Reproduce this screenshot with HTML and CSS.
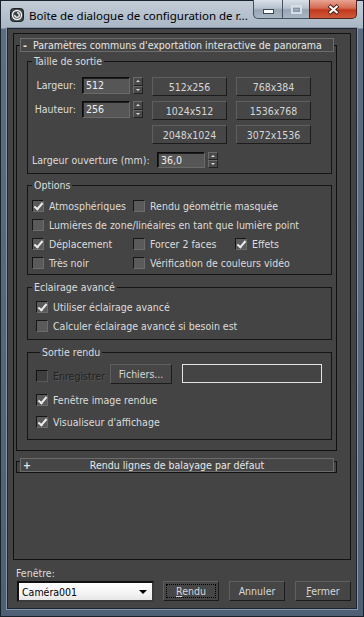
FILE: index.html
```html
<!DOCTYPE html>
<html lang="fr">
<head>
<meta charset="UTF-8">
<title>Boîte de dialogue de configuration de rendu panorama</title>
<link rel="stylesheet" href="styles.css">
</head>
<body>
<div class="window">
  <div class="titlebar">
    <svg class="app-icon" width="14" height="14" viewBox="0 0 14 14">
      <rect x="0.5" y="0.5" width="13" height="13" rx="3" fill="#3d4446" stroke="#1c2224"/>
      <circle cx="7" cy="7" r="4.5" fill="none" stroke="#f2f2f2" stroke-width="1.5"/>
      <path d="M7 4.7 A2.3 2.3 0 1 1 4.7 7" fill="none" stroke="#f2f2f2" stroke-width="1.3"/>
    </svg>
    <span class="title">Boîte de dialogue de configuration de r...</span>
    <div class="caption">
      <span class="cap cap-min">
        <svg width="11" height="5" viewBox="0 0 11 5"><rect x="0.5" y="0.5" width="10" height="4" fill="#fff" stroke="#3a4654"/></svg>
      </span>
      <span class="cap cap-max">
        <svg width="11" height="9" viewBox="0 0 11 9"><rect x="1" y="1" width="9" height="7" fill="none" stroke="#d6dde5" stroke-width="2"/><rect x="2.5" y="3.5" width="6" height="3" fill="none" stroke="#8694a3"/></svg>
      </span>
      <span class="cap cap-close">
        <svg width="13" height="11" viewBox="0 0 13 11"><path d="M2 1.5 L11 9.5 M11 1.5 L2 9.5" stroke="#4a1a12" stroke-width="4"/><path d="M2.5 2 L10.5 9 M10.5 2 L2.5 9" stroke="#fff" stroke-width="2.2"/></svg>
      </span>
    </div>
  </div>

  <div class="client">
    <div class="panel">
      <div class="rollout">
        <div class="rollout-head"><span class="toggle">-</span><span>Paramètres communs d'exportation interactive de panorama</span><span></span></div>
        <div class="rollout-body">

          <div class="group group-size">
            <div class="legend">Taille de sortie</div>
            <div class="size-top">
              <div class="dims">
                <div class="dim-row">
                  <span class="dim-label">Largeur:</span>
                  <span class="num">512</span>
                  <span class="spin"><span class="up"></span><span class="down"></span></span>
                </div>
                <div class="dim-row">
                  <span class="dim-label">Hauteur:</span>
                  <span class="num">256</span>
                  <span class="spin"><span class="up"></span><span class="down"></span></span>
                </div>
              </div>
              <div class="presets">
                <button class="btn">512x256</button>
                <button class="btn">768x384</button>
                <button class="btn">1024x512</button>
                <button class="btn">1536x768</button>
                <button class="btn">2048x1024</button>
                <button class="btn">3072x1536</button>
              </div>
            </div>
            <div class="aperture">
              <span class="aperture-label">Largeur ouverture (mm):</span>
              <span class="num num-short">36,0</span>
              <span class="spin spin-short"><span class="up"></span><span class="down"></span></span>
            </div>
          </div>

          <div class="group group-options">
            <div class="legend">Options</div>
            <div class="options">
              <label class="opt"><span class="check on"></span>Atmosphériques</label>
              <label class="opt wide"><span class="check"></span>Rendu géométrie masquée</label>
              <label class="opt full"><span class="check"></span>Lumières de zone/linéaires en tant que lumière point</label>
              <label class="opt"><span class="check on"></span>Déplacement</label>
              <label class="opt"><span class="check"></span>Forcer 2 faces</label>
              <label class="opt"><span class="check on"></span>Effets</label>
              <label class="opt"><span class="check"></span>Très noir</label>
              <label class="opt wide"><span class="check"></span>Vérification de couleurs vidéo</label>
            </div>
          </div>

          <div class="group group-light">
            <div class="legend">Eclairage avancé</div>
            <div class="list">
              <label class="opt"><span class="check on"></span>Utiliser éclairage avancé</label>
              <label class="opt"><span class="check"></span>Calculer éclairage avancé si besoin est</label>
            </div>
          </div>

          <div class="group group-output">
            <div class="legend">Sortie rendu</div>
            <div class="save-row">
              <label class="opt disabled"><span class="check"></span>Enregistrer</label>
              <button class="btn btn-files">Fichiers...</button>
              <span class="path"></span>
            </div>
            <label class="opt out-row"><span class="check on"></span>Fenêtre image rendue</label>
            <label class="opt out-row last"><span class="check on"></span>Visualiseur d'affichage</label>
          </div>

        </div>
      </div>

      <div class="rollout closed">
        <div class="rollout-head"><span class="toggle">+</span><span>Rendu lignes de balayage par défaut</span><span></span></div>
      </div>
    </div>

    <div class="footer-label">Fenêtre:</div>
    <div class="footer-row">
      <div class="select">Caméra001<span class="arrow"></span></div>
      <button class="btn btn-main focused"><u>R</u>endu</button>
      <button class="btn btn-main">Annuler</button>
      <button class="btn btn-main"><u>F</u>ermer</button>
    </div>
  </div>
</div>
</body>
</html>
```

FILE: styles.css
```css
* {
  box-sizing: border-box;
}

body {
  margin: 0;
  background: #000;
  font-family: "DejaVu Sans Condensed", "DejaVu Sans", sans-serif;
  font-size: 10.5px;
  color: #dcdcdc;
}

button {
  font: inherit;
  color: inherit;
  padding: 0;
}

.window {
  width: 364px;
  height: 617px;
  border: 1px solid #18222d;
  background: linear-gradient(#c3cdd8, #a9b6c4 27px, #5d6e83 28px, #4f6075);
  padding: 0 6px 7px;
  display: flex;
  flex-direction: column;
}

/* title bar */
.titlebar {
  height: 27px;
  margin: 0 -6px;
  padding-left: 9px;
  display: flex;
  align-items: flex-start;
}
.app-icon {
  margin-top: 7px;
  flex: none;
}
.title {
  margin-left: 5px;
  margin-top: 6px;
  font-family: "Noto Sans", "Open Sans", sans-serif;
  font-size: 11.5px;
  line-height: 17px;
  color: #000;
  white-space: nowrap;
}
.caption {
  margin-left: auto;
  margin-right: 6px;
  margin-top: -1px;
  display: flex;
}
.cap {
  height: 19px;
  display: flex;
  align-items: center;
  justify-content: center;
  border: 1px solid #45515f;
  border-top: 0;
  background: linear-gradient(#d9e0e8, #b7c2ce 45%, #97a5b5 55%, #a9b6c4);
}
.cap-min {
  width: 29px;
  border-right: 0;
  border-bottom-left-radius: 5px;
  padding-top: 4px;
}
.cap-max {
  width: 27px;
  border-right: 0;
}
.cap-close {
  width: 48px;
  border-color: #50261e;
  border-bottom-right-radius: 5px;
  background: linear-gradient(#e8a491, #d36b52 45%, #c2391c 55%, #cf5b3c);
}

/* client */
.client {
  flex: 1;
  background: #444;
  border: 1px solid #1c2632;
  box-shadow: 0 0 0 1px #8796a8;
  display: flex;
  flex-direction: column;
}

.panel {
  height: 527px;
  margin: 4px 5px 0;
  border: 1px solid #121212;
  padding: 11px 13px 0 2px;
}

.rollout {
  border: 1px solid #111;
}
.rollout.closed {
  margin-top: 10px;
}
.rollout-head {
  margin: -8px 2px 0 3px;
  height: 14px;
  border: 1px solid #6c6c6c;
  background: #464646;
  color: #e6e6e6;
  line-height: 12px;
  display: grid;
  grid-template-columns: 12px 1fr 12px;
  text-align: center;
  white-space: nowrap;
}
.rollout.closed .rollout-head {
  margin-top: -4px;
}
.toggle {
  text-align: left;
  padding-left: 2px;
  font-weight: bold;
}
.rollout-body {
  padding: 0 4px 10px 10px;
}

.group {
  border: 1px solid #141414;
  margin-top: 12px;
}
.group-size {
  margin-top: 9px;
  padding-bottom: 5px;
}
.group-options {
  margin-top: 11px;
}
.legend {
  margin: -7px 0 0 4px;
  padding: 0 2px;
  width: max-content;
  line-height: 13px;
  background: #444;
}

/* output size */
.size-top {
  display: flex;
  margin-top: 9px;
}
.dim-row {
  display: flex;
  align-items: flex-start;
  height: 19px;
}
.dim-row + .dim-row {
  margin-top: 5px;
}
.dim-label {
  width: 48px;
  text-align: right;
  line-height: 17px;
}
.num {
  width: 48px;
  height: 17px;
  margin-left: 6px;
  padding-left: 3px;
  line-height: 14px;
  background: #565656;
  color: #eee;
  border: 1px solid;
  border-color: #0c0c0c #6a6a6a #6a6a6a #0c0c0c;
  box-shadow: inset 1px 1px #1e1e1e;
}
.spin {
  width: 10px;
  height: 17px;
  margin-left: 3px;
  display: flex;
  flex-direction: column;
}
.spin span {
  flex: 1;
  border: 1px solid;
  border-color: #6a6a6a #222 #222 #6a6a6a;
  background: #4a4a4a;
  display: flex;
  align-items: center;
  justify-content: center;
}
.spin .up::after,
.spin .down::after {
  content: "";
  border-left: 2px solid transparent;
  border-right: 2px solid transparent;
}
.spin .up::after {
  border-bottom: 2px solid #ddd;
}
.spin .down::after {
  border-top: 2px solid #ddd;
}

.presets {
  display: grid;
  grid-template-columns: 75px 75px;
  grid-auto-rows: 19px;
  gap: 5px 9px;
  margin-left: 9px;
}
.btn {
  background: #464646;
  border: 1px solid;
  border-color: #5f5f5f #1c1c1c #1c1c1c #5f5f5f;
  color: #d6d6d6;
  line-height: 16px;
}

.aperture {
  display: flex;
  align-items: flex-start;
  margin-top: 8px;
  padding-left: 4px;
}
.aperture-label {
  width: 125px;
  line-height: 16px;
  white-space: nowrap;
}
.num-short {
  height: 16px;
  margin-left: 0;
}
.spin-short {
  height: 16px;
}

/* checkboxes */
.opt {
  display: flex;
  align-items: center;
  gap: 5px;
  height: 19px;
  white-space: nowrap;
}
.check {
  flex: none;
  position: relative;
  width: 12px;
  height: 12px;
  background: #5a5a5a;
  border: 1px solid;
  border-color: #161616 #6c6c6c #6c6c6c #161616;
}
.check.on::after {
  content: "";
  position: absolute;
  left: 3px;
  top: 0;
  width: 3px;
  height: 7px;
  border: solid #ececec;
  border-width: 0 2px 2px 0;
  transform: rotate(40deg);
}

.options {
  display: grid;
  grid-template-columns: 101px 102px auto;
  grid-auto-rows: 19px;
  margin-top: 4px;
  padding: 0 0 2px 4px;
}
.options .full {
  grid-column: 1 / 4;
}
.options .wide {
  grid-column: span 2;
}

.list {
  margin-top: 3px;
  padding: 0 0 4px 8px;
}

/* render output */
.group-output {
  padding: 0 0 6px 8px;
}
.save-row {
  display: flex;
  align-items: flex-start;
  margin-top: 5px;
}
.save-row .opt {
  width: 74px;
  height: 20px;
  margin-top: 2px;
}
.disabled {
  color: #222;
  text-shadow: 1px 1px #555;
}
.disabled .check {
  background: #3e3e3e;
  border-color: #111 #5a5a5a #5a5a5a #111;
}
.btn-files {
  width: 62px;
  height: 20px;
}
.path {
  width: 140px;
  height: 19px;
  margin-left: 10px;
  border: 1px solid #e4e4e4;
}
.out-row {
  height: 22px;
}
.out-row:first-of-type {
  margin-top: 3px;
}

/* footer */
.footer-label {
  margin: 6px 0 0 8px;
  line-height: 15px;
}
.footer-row {
  display: flex;
  align-items: flex-start;
  padding-left: 9px;
}
.select {
  width: 137px;
  height: 21px;
  padding-left: 3px;
  display: flex;
  align-items: center;
  justify-content: space-between;
  color: #000;
  background: linear-gradient(#fff, #f4f4f4 60%, #e6e6e6);
  border: 2px solid;
  border-color: #111 #3a3a3a #3a3a3a #111;
}
.arrow {
  margin-right: 5px;
  border-left: 4px solid transparent;
  border-right: 4px solid transparent;
  border-top: 4px solid #000;
}
.btn-main {
  width: 56px;
  height: 20px;
  margin-left: 10px;
}
.select + .btn-main {
  margin-left: 9px;
}
.focused {
  outline: 1px dotted #000;
  outline-offset: -4px;
}
```
